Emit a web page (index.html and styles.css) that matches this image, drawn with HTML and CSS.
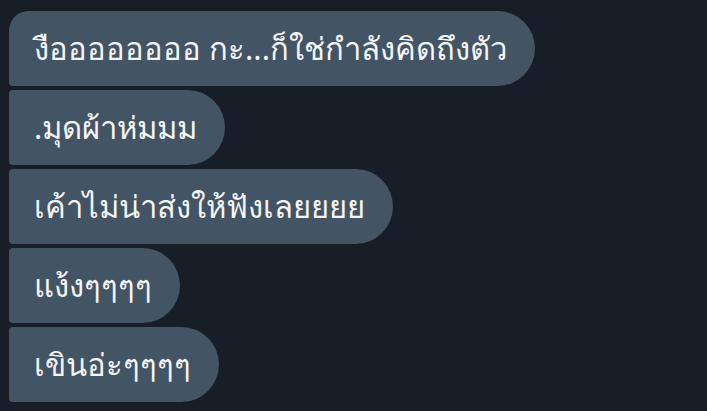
FILE: index.html
```html
<!DOCTYPE html>
<html lang="th">
<head>
<meta charset="utf-8">
<link rel="stylesheet" href="styles.css">
</head>
<body>
<div class="chat">
  <div class="bubble first">งืออออออออ กะ...ก็ใช่กำลังคิดถึงตัว</div>
  <div class="bubble">.มุดผ้าห่มมม</div>
  <div class="bubble">เค้าไม่น่าส่งให้ฟังเลยยยย</div>
  <div class="bubble">แง้งๆๆๆๆ</div>
  <div class="bubble">เขินอ่ะๆๆๆๆ</div>
</div>
</body>
</html>
```
FILE: styles.css
```css
html, body {
  margin: 0;
  padding: 0;
  background: #171e28;
}
body {
  width: 707px;
  height: 411px;
  overflow: hidden;
  font-family: "Noto Sans", "DejaVu Sans", sans-serif;
}
.chat {
  display: flex;
  flex-direction: column;
  align-items: flex-start;
  gap: 4px;
  padding: 11px 0 0 9px;
}
.bubble {
  box-sizing: border-box;
  height: 75px;
  display: flex;
  align-items: center;
  padding: 0 28px 0 25px;
  background: #435464;
  color: #f4f5f6;
  font-size: 31px;
  white-space: nowrap;
  border-radius: 4px 38px 38px 4px;
}
.bubble.first {
  border-top-left-radius: 20px;
}
```
